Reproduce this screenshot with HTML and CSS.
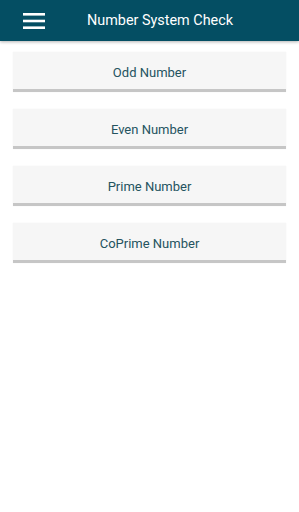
FILE: index.html
```html
<!DOCTYPE html>
<html>
<head>
<meta charset="utf-8">
<link rel="stylesheet" href="styles.css">
</head>
<body>
<header class="appbar">
  <div class="menu">
    <svg width="22" height="16" viewBox="0 0 22 16"><rect x="0" y="0" width="22" height="2.6" fill="#fff"/><rect x="0" y="6.7" width="22" height="2.6" fill="#fff"/><rect x="0" y="13.4" width="22" height="2.6" fill="#fff"/></svg>
  </div>
  <div class="title">Number System Check</div>
</header>
<main class="list">
  <button class="btn">Odd Number</button>
  <button class="btn">Even Number</button>
  <button class="btn">Prime Number</button>
  <button class="btn">CoPrime Number</button>
</main>
</body>
</html>
```
FILE: styles.css
```css
html, body { margin: 0; padding: 0; background: #fff; }
body { font-family: Roboto, "Liberation Sans", sans-serif; width: 299px; height: 512px; overflow: hidden; }
.appbar {
  height: 41px;
  background: #044e63;
  display: flex;
  align-items: center;
  box-shadow: 0 1px 3px rgba(0,0,0,0.3);
}
.menu { width: 22px; height: 16px; margin-left: 23px; display: flex; }
.title { color: #fff; font-size: 14.4px; margin-left: 42px; }
.list { display: flex; flex-direction: column; gap: 17px; padding: 11px 13px 0; }
.btn {
  height: 40px;
  border: none;
  border-bottom: 3px solid #c6c6c6;
  background: #f6f6f6;
  color: #24535f;
  font-family: Roboto, "Liberation Sans", sans-serif;
  font-size: 13px;
  padding: 3px 0 0;
  box-shadow: 0 0 1px rgba(0,0,0,0.08);
}
```
